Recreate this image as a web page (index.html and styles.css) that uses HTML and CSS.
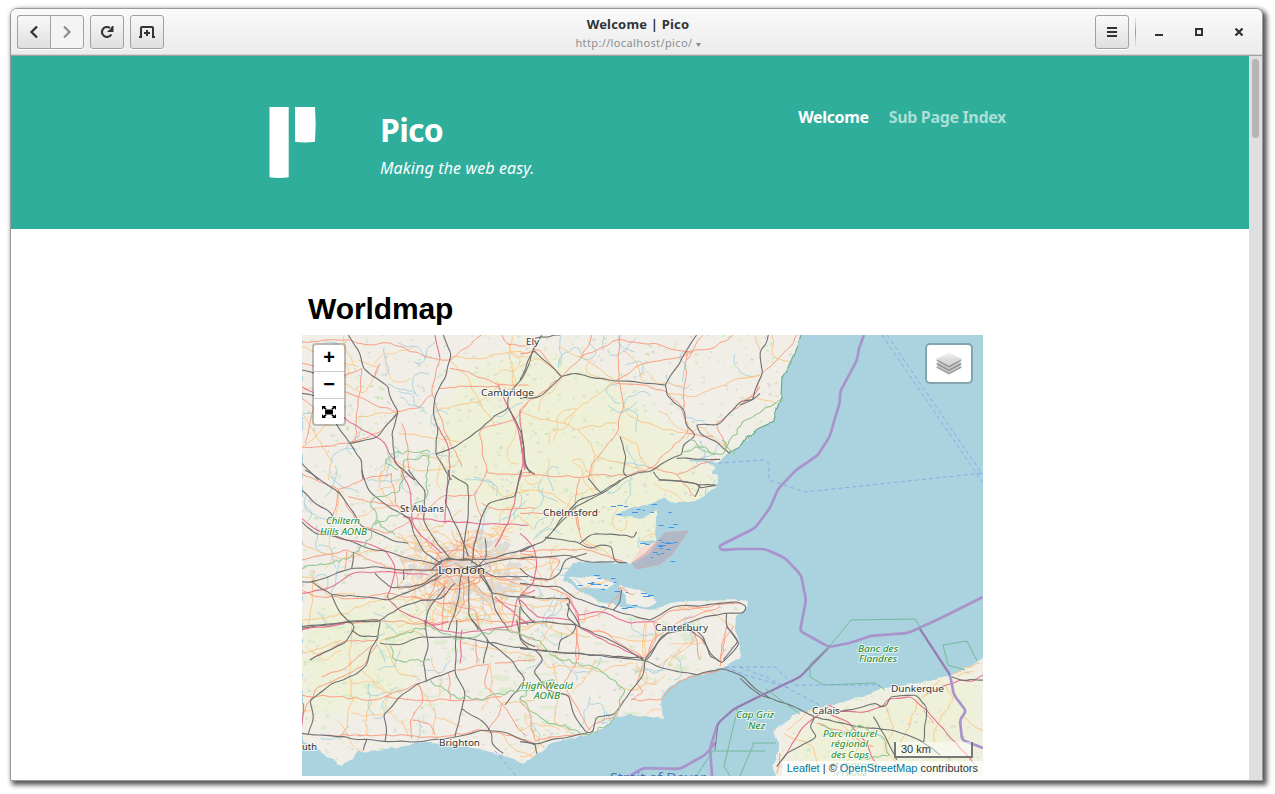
FILE: index.html
```
<!DOCTYPE html>
<html lang="en">
<head>
<meta charset="utf-8">
<title>Welcome | Pico</title>
<link rel="stylesheet" href="styles.css">
</head>
<body>
<div class="window">
  <div class="titlebar">
    <div class="tools">
      <div class="pair">
        <button class="btn"><svg width="16" height="16" viewBox="0 0 16 16"><path d="M11 2.500 5.500 8l5.500 5.500" fill="none" stroke="#2e3436" stroke-width="2.300"/></svg></button>
        <button class="btn off"><svg width="16" height="16" viewBox="0 0 16 16"><path d="M5 2.500 10.500 8 5 13.500" fill="none" stroke="#8b8e8f" stroke-width="2.200"/></svg></button>
      </div>
      <button class="btn"><svg width="16" height="16" viewBox="0 0 16 16"><path d="M12.300 10.500A5 5 0 1 1 11 4" fill="none" stroke="#2e3436" stroke-width="2.100"/><path d="M14.500 2v6H8.500V7l2.500-1.500L13 2z" fill="#2e3436"/></svg></button>
      <button class="btn"><svg width="16" height="16" viewBox="0 0 16 16"><path d="M0 13h2V4Q2 3 3 3h10q1 0 1 1v9h2" fill="none" stroke="#2e3436" stroke-width="2"/><path d="M5 9h6M8 6v6" stroke="#2e3436" stroke-width="2"/></svg></button>
    </div>
    <div class="heading"><div class="title">Welcome | Pico</div><div class="url">http://localhost/pico/ <svg width="5" height="4" viewBox="0 0 5 4"><path d="M0 0h5L2.500 4z" fill="#888"/></svg></div></div>
    <div class="controls">
      <button class="btn"><svg width="16" height="16" viewBox="0 0 16 16"><path d="M3 4h10M3 8h10M3 12h10" stroke="#2e3436" stroke-width="2"/></svg></button>
      <span class="sep"></span>
      <svg width="16" height="16" viewBox="0 0 16 16"><path d="M4 11h8" stroke="#2e3436" stroke-width="2"/></svg>
      <svg width="16" height="16" viewBox="0 0 16 16"><path d="M5 5h6v6H5z" fill="none" stroke="#2e3436" stroke-width="2"/></svg>
      <svg width="16" height="16" viewBox="0 0 16 16"><path d="M4.500 4.500l7 7M11.500 4.500l-7 7" stroke="#2e3436" stroke-width="2.300"/></svg>
    </div>
  </div>
  <div class="viewport">
    <div class="page">
      <header class="banner">
        <svg class="logo" width="48" height="72" viewBox="0 0 48 72"><path d="M.5 0H19.700v70.300q-9.500 1.400-19.200 0zM26 0h20q1.400 17 0 34.800-10 1.600-20 0z" fill="#fff"/></svg>
        <div class="brand"><h1>Pico</h1><p>Making the web easy.</p></div>
        <nav><a class="here">Welcome</a><a>Sub Page Index</a></nav>
      </header>
      <main>
        <h2>Worldmap</h2>
        <div class="map">
          <svg class="tiles" width="681" height="441" viewBox="302 335 681 441">
            <defs>
              <filter id="shore" x="302" y="335" width="681" height="441" filterUnits="userSpaceOnUse" color-interpolation-filters="sRGB"><feTurbulence type="fractalNoise" baseFrequency=".08" numOctaves="3" seed="8"/><feDisplacementMap in="SourceGraphic" scale="5" xChannelSelector="R" yChannelSelector="G"/></filter>
              <filter id="blur" x="-30%" y="-30%" width="160%" height="160%"><feGaussianBlur stdDeviation="9"/></filter>
              <clipPath id="land"><path d="M302 325H802L798 345 790 363 782 378 781 398 775 412 773 422 755 430 748 440 740 447 728 453 718 462 680 457 716 466 712 474 719 476 717 485 706 495 695 501 676 503 664 497 655 503 640 506 612 514 640 519 657 510 656 540 634 541 650 545 640 557 630 563 590 562 573 563 566 573 563 581 580 590 600 602 650 611 670 604 690 601 740 600 748 601 747 610 736 617 735 630 741 645 740 657 722 668 680 680 667 690 661 700 663 719 630 714 615 717 597 733 550 743 540 752 525 763 510 758 495 753 460 745 430 742 400 747 370 751 357 752 350 760 342 766 325 755 315 746 302 742ZM990 656 950 676 920 683 885 688 850 700 820 708 800 712 786 723 773 731 778 745 777 760 772 766 778 780H990ZM568 578 598 577 616 583 606 589 580 587ZM620 586 645 592 658 602 650 608 628 604Z"/></clipPath>
            </defs>
            <rect x="302" y="335" width="681" height="441" fill="#aad3df"/>
            <g filter="url(#shore)">
              <g clip-path="url(#land)">
                <rect x="290" y="320" width="710" height="470" fill="#f1eee8"/>
                <g filter="url(#blur)" fill="#eef1d8">
                  <path d="M435 420 470 365 540 350 620 385 690 450 720 490 660 560 550 550 500 520 440 490ZM302 600h130l-30 100-100 20ZM800 720l180-50v110H780Z"/>
                </g>
                <g id="patches"></g>
              </g>
              <path d="M801 335 798 345 790 363 782 378 781 398 775 412 773 422 755 430 740 447 728 453" fill="none" stroke="#6cae8c" stroke-width="1.200"/>
            </g>
            <g clip-path="url(#land)"><path id="creeks"/><path id="lanes"/></g>

            <g class="net">
              <g transform="translate(295 280) scale(.33333)">
                <path class="s" d="M20 200 100 230 190 260M190 240 250 260 230 310 200 340 120 300M465 240 520 290 550 360 600 440M465 230 560 235 650 215 720 220M310 395 190 410M20 400 110 540 100 600M20 505 100 430M310 460 400 470 500 490M250 600 280 540 360 570 480 560M610 315 560 360 430 390M640 190 660 340M380 520 430 540"/>
                <path class="p" d="M20 185 150 180 230 195 290 190 380 225 465 240 560 165M435 235 410 330 430 400 500 560M465 265 520 275 610 315 700 315M430 325 510 320 610 320M200 265 190 380 180 490 20 500M255 250 240 290M20 250 140 290 200 265M150 335 230 370 310 395 370 385 410 345M310 400 250 460 170 485M320 430 340 520 345 580M20 355 60 380 30 490M700 365 660 420 555 450 575 580 720 580M620 165 640 195 720 195"/>
                <path class="m" d="M420 165 435 235M610 315 640 380 670 450 690 570M20 320 70 345 150 415 200 450 260 480 310 560 360 600M430 440 460 500 465 600"/>
                <path class="r" d="M160 165 190 210 205 265 280 320 285 350 310 395 290 460 300 550 360 600M445 165 468 220 455 280 422 345 415 400 428 440 422 520 470 600M422 522 490 495 560 445 600 405 640 385 640 350 690 280 718 200M640 385 680 460 692 565 720 585M20 270 70 285M20 340 100 355 125 435 165 490 200 540 205 600M165 490 250 470 305 400M20 550 70 600"/>
              </g>
              <g transform="translate(520 330) scale(.33333)">
                <path class="s" d="M0 245 60 270 130 280 175 300 290 275M130 280 165 240 240 190 290 155M310 220 330 260 400 285 430 300 500 305M175 300 215 340 225 375 370 420M290 310 350 340 375 410M310 60 355 110 370 155M120 50 200 90 285 150M440 190 520 200 560 185 640 150 720 135M0 480 100 490 160 540M225 375 205 445M0 110 60 85 120 135M0 560 40 600M500 325 540 290 620 350"/>
                <path class="p" d="M0 70 60 60 125 140 60 190 0 240M125 140 185 80 290 30 420 45 500 65 580 55 640 15M300 15 295 150 310 220 290 310 215 400 205 445M290 160 380 165 440 185 480 220 505 300 490 320 430 375 400 410 325 435 130 440 0 435M500 60 490 240M550 15 500 90M590 280 600 310 625 370M500 310 580 320M590 280 660 230 720 170M380 410 470 435 590 385M470 435 525 500M180 445 165 520M165 530 180 600M0 550 150 560 240 545M290 150 370 100 460 85 520 65M215 15 205 50 185 80"/>
                <path class="m" d="M0 240 10 400 0 440M0 320 15 410"/>
                <path class="r" d="M530 15 435 165 440 195 495 245 500 290 520 305 525 320 490 345 485 375 455 385 400 420 350 430 320 440 245 490 165 530 100 600M0 150 40 60 120 135 125 140 160 130 230 145 435 165M125 140 60 200 0 205M40 60 65 15M45 25 120 15M300 320 318 380 310 430 322 440M205 445 245 490M400 425 415 450 490 455 540 465 585 465M540 465 525 500M530 285 600 282 660 215 700 210 720 190M530 285 545 315 590 335 630 370M5 300 15 400 30 430M470 385 600 388"/>
              </g>
              <g transform="translate(740 330) scale(.33333)">
                <path class="s" d="M45 15 60 60M95 15 100 80 150 95M0 145 60 135M50 205 105 220"/><path class="p" d="M170 15 150 50 105 95 65 130 40 200 0 215"/><path class="r" d="M85 15 80 40 60 65 68 130 42 190 40 208 0 225"/>
              </g>
              <g transform="translate(295 470) scale(.33333)">
                <path class="s" d="M20 220 80 250 140 270 280 230M60 300 40 480M20 450 120 440 200 410 280 380M300 110 250 50 260 0M300 200 380 230 470 220 590 250M310 250 340 320 310 350M380 180 440 170 500 120M400 250 350 330 420 430 500 450M470 180 490 240 450 290 500 330 470 390 490 430M520 180 520 230 610 280 590 340 620 390M540 290 540 360 620 440 650 480M320 270 400 280 430 340 560 370 700 365M330 400 400 370 440 380 490 350M580 40 620 80 700 60M600 300 700 290M600 200 550 180 490 230 440 310 470 360 560 300M380 300 390 370 480 440M20 320 60 330 100 380 180 370M640 160 590 240 620 260 720 250M310 190 360 240 450 250M420 200 400 240 440 260M550 210 580 190 640 200M600 330 660 350 720 340M340 360 400 340 440 350M450 400 540 390 590 410M540 440 600 430 680 440M320 430 360 460 420 450"/>
                <path class="p" d="M20 10 130 60 200 30 290 10M130 60 120 120 100 150M160 80 250 100 380 115M200 170 280 190 350 150 450 75 540 75 570 20 575 0M540 75 560 150 530 250 550 310 700 350M20 270 160 240 300 300 400 300 470 270 560 260 720 270M150 300 155 245M130 60 190 160M290 10 300 100 380 200 440 270M20 360 60 380 190 385 290 370 400 390 460 330M300 300 310 360 450 320 560 320 680 330M450 330 440 480M500 320 600 390 670 410M350 380 460 400 540 420 560 480M560 100 620 120 720 115M140 460 230 450 390 460 530 450 700 460M400 390 460 250 540 200M480 210 540 240 590 300 490 350 420 290M430 250 500 240 560 280 550 340 470 360 420 330 430 250M500 330 510 400 480 440M440 290 480 280 530 300"/>
                <path class="m" d="M20 145 65 180 150 210 215 220 275 245 300 290 290 345 275 380 310 420 410 465 460 455M320 0 345 60 350 150 370 190 440 250M325 140 450 155 540 160 700 165M460 0 450 160M680 0 660 90 640 160 600 230M20 370 100 355 170 310 250 305 400 315M650 470 670 380 720 360M600 380 700 465"/>
                <path class="r" d="M30 0 130 65 170 120 195 165 290 210 340 220M20 60 60 100 100 120 115 140M20 155 60 190 130 200 220 235 280 245 340 265 430 285M200 0 220 60 280 110 345 145 355 190 390 250 440 280M340 0 390 60 385 150 420 210 470 270M460 0 465 20 450 100 490 180 520 260M470 15 520 45 520 120 510 200 505 270M680 0 660 80 580 100 565 130 545 190 530 280M20 335 50 335 170 295 250 290 320 300 430 300M240 310 290 355 380 345 430 310M50 335 110 375 200 380 280 390 330 370 420 330 450 300M20 475 160 455 250 455 310 415 380 390 440 385 480 340M110 375 130 420 165 460M170 295 175 245M430 285 450 265 490 270 600 265 720 225M440 300 540 290 620 270 720 260M530 290 600 320 700 320M540 290 590 370 660 380 720 380M540 290 560 310 590 360 600 420 640 480M500 310 490 390 480 430 460 480M520 320 520 430 550 480M410 300 440 270 520 265 570 300M450 350 400 420 390 480M570 205 575 260 530 310M670 380 680 420 720 460M325 300 325 330"/>
              </g>
              <g transform="translate(520 480) scale(.33333)">
                <path class="s" d="M0 280 120 240M190 180 240 205 290 240M0 330 60 360 150 360M160 350 200 320 270 300M0 375 100 380 160 340M0 440 60 430 130 430 160 460M380 430 370 540M470 380 570 390 640 440M230 450 320 480 400 480 430 440M60 500 130 540M200 380 190 430M100 420 60 500 0 490M20 240 50 260 70 320"/>
                <path class="p" d="M0 215 100 210 200 210 310 245M165 95 190 190 230 210M30 300 90 300 120 240 0 220M0 310 80 320 150 350 175 420 240 400 295 350 300 320 340 345M400 425 460 390 600 375 665 370M170 440 175 540M400 425 450 450 520 450 540 540M375 535 400 480 470 430 600 380M600 540 610 480 640 440M185 445 260 460 370 535"/>
                <path class="m" d="M0 160 40 200 50 260 40 310 0 350M0 360 50 410 150 420M175 405 240 395 330 430 400 425M140 350 175 400 180 445 280 495 370 535"/>
                <path class="r" d="M0 215 70 185 140 100 175 60 240 40 300 0M75 172 170 185 210 205 240 195 275 200 285 245 320 248M0 235 140 225 200 245 285 245M180 190 215 162 320 165 340 175 350 155M0 265 30 290 90 300 120 280 135 240 200 220M0 310 70 320 120 320 165 355 280 390 390 420M0 345 60 355 150 355 140 410 175 440 280 485 370 540M140 370 180 440M390 420 460 380 560 375 650 365 680 380 670 400 610 400 540 415 450 450 420 480 380 540M510 450 550 480 570 530 600 545M280 390 300 370 305 330M0 430 70 425 170 435 160 460 120 480 115 510M620 400 620 440 655 485 610 540M0 505 90 515 240 525 370 535M415 0 530 10 540 25 590 15M0 380 0 480 30 510"/>
              </g>
              <g transform="translate(295 620) scale(.33333)">
                <path class="s" d="M170 20 165 150 170 250 140 355M270 75 310 160 370 170M250 70 340 30 390 50M230 240 210 310 220 350M370 195 420 270 410 345M420 290 500 320M500 70 620 90 720 110M585 130 590 220 560 270M200 150 270 220M620 250 720 240M20 100 140 60M320 300 340 345M620 340 660 390 720 410"/>
                <path class="p" d="M20 225 100 230 240 240 300 215 370 190M45 120 145 65 250 60M20 290 45 240 70 200 200 140 245 75M370 190 385 240 345 300 350 355M270 230 380 240 530 240 620 230M100 345 260 345 440 350 560 330 620 340 720 370M485 150 580 130 570 200 620 250 610 290 580 330M540 50 545 130M350 300 400 310 420 345M620 250 660 310 690 345M580 30 640 30 720 60M460 160 465 240M240 70 140 150 80 170M600 130 720 120"/>
                <path class="m" d="M20 30 150 10M390 0 430 30 500 40 660 15 720 0M500 30 495 130M25 250 20 320"/>
                <path class="r" d="M20 20 160 5 250 0M45 120 90 95 150 70 180 20 160 0M170 30 200 50 250 50 255 0M250 50 225 90 215 135 180 165 110 190 45 240 55 290 40 345M20 340 130 350 270 365 380 365 460 355 485 350 570 330 640 340 720 375M270 365 275 330 265 285 320 225 370 190 400 180 480 150M390 0 400 80 385 130 395 185M485 0 480 160 510 215 500 270 480 350M255 70 310 75 380 50 480 50 720 90M530 0 580 60 565 130M575 60 650 120 690 180 630 255M500 265 570 310 590 340 590 370 625 400M215 360 205 390M665 0 680 60 720 80"/>
              </g>
              <g transform="translate(520 620) scale(.33333)">
                <path class="s" d="M0 30 60 10 130 40 210 50M50 80 80 140 180 140 230 155 340 130M370 0 370 110M100 130 120 220 100 300 155 340M230 120 190 190 160 210M0 330 50 310 120 330M410 140 490 90 530 60M0 410 40 400 90 350"/>
                <path class="p" d="M0 245 30 280 45 365 100 350 200 340 225 310 290 290 310 240M170 30 170 130 130 190 180 280 210 330M375 120 350 190 370 220 330 240 420 240 480 180 600 150M400 0 410 50 375 120M520 30 560 80M600 140 620 20"/>
                <path class="r" d="M0 85 45 90 150 100 370 120 430 145 530 165 605 145 670 170 710 210 750 235M45 90 70 120 40 155 80 210 145 225 165 290 200 340 220 335 230 290 280 285 310 245 370 165 375 120 430 45 520 25 550 50 570 100 605 130 658 70 620 20M0 365 45 372 120 355 200 340M45 372 50 400"/>
              </g>
              <g transform="translate(740 600) scale(.33333)">
                <path class="s" d="M140 390 220 330M440 320 460 380 430 450 480 500M530 300 510 380 470 450M620 260 640 300 590 380 580 440M640 220 720 190M280 340 360 440 300 500M600 240 540 300M665 350 730 390M130 400 220 440 230 500M650 230 700 215"/>
                <path class="m" d="M265 315 300 335 380 335 430 320 440 300 510 290 560 330 620 400 700 490M265 340 330 370 380 430 400 480 440 515M125 480 190 380 265 320M560 280 660 240 700 245 730 225"/>
                <path class="p" d="M120 460 110 520M230 370 320 400 400 440M550 330 580 370"/>
                <path class="r" d="M0 235 60 285 150 315 225 350 210 380 230 410 140 460 110 500M225 350 350 380 460 390 540 420 600 465M300 335 410 310 420 320 440 318 450 290 530 285 560 320 550 430M400 350 450 440 470 480M635 230 660 240 730 240"/>
              </g>
            </g>

            <g class="parks">
              <path d="M302 569 325 565 350 557 370 540 376 522 372 500 400 490 404 460 430 455 425 500 375 525M375 520 395 535M398 470 385 460 395 453 430 452"/>
              <path d="M385 640 430 625 455 640 500 630 540 640 550 655 600 670 625 690 620 705 612 720 590 735 545 720 520 700 530 690 555 680 520 690 480 700 450 695 430 680M390 645 395 660 430 660"/>
              <path d="M690 440 720 455 745 420 785 400M722 440 735 455M683 452 700 448 715 455M820 725 840 735 860 725 880 735 890 755 860 760"/>
            </g>
            <g class="borders">
              <path d="M864 335 859 348 857 360 849 375 840 392 840 402 835 418 830 436 818 455 796 470 778 489 770 508 755 528 719 546 721 550 735 549 765 549 785 558 801 575 806 600 800 631 829 647 850 643 870 636 908 633 941 618 983 597M829 647 800 677 758 697 734 709 718 723 710 748 712 776M630 776 643 768 680 769 705 755 716 742M920 629 950 675 954 695 966 711 960 720 962 740 983 748"/>
              <path class="thin" d="M829 647 800 677 758 697 734 709 718 723 715 750M920 629 950 675"/>
            </g>
            <g fill="none" stroke="#75b99a" stroke-width="1"><path d="M829 647 851 620 915 619 921 629M829 647 810 664V677L824 685 875 683 885 690M943 645 967 641 977 661M943 645 948 665 965 670M738 707 724 766 730 776M752 743H776M740 776 754 743M713 751H765M713 751 697 775M766 689 800 714"/></g>
            <g fill="none" stroke="#839ee8" stroke-width=".8" stroke-dasharray="4 3"><path d="M882 335 985 486M887 335 985 478M718 463 764 460 769 464V480L805 492 880 484 983 473M725 667 775 667 794 685 880 685M725 667 745 675 790 688M740 667 768 678 820 705M495 751 516 776"/></g>
            <path d="M632 561 640 548 658 541 650 553 634 563Z" fill="#f3ddd3"/>
            <path d="M632 563 646 553 665 533 688 531 672 554 660 564 637 569Z" fill="#b78899" fill-opacity=".35" stroke="#d2a6a5" stroke-width=".8"/>
            <path id="tides" stroke="#3f95e7" stroke-width="1"/>
            <g class="labels">
              <text x="526" y="345" textLength="13" lengthAdjust="spacingAndGlyphs">Ely</text><text x="481" y="396" textLength="53" lengthAdjust="spacingAndGlyphs">Cambridge</text><text x="400" y="512" textLength="44" lengthAdjust="spacingAndGlyphs">St Albans</text><text x="543" y="516" textLength="55" lengthAdjust="spacingAndGlyphs">Chelmsford</text><text class="city" x="438" y="574" textLength="47" lengthAdjust="spacingAndGlyphs">London</text><text x="655" y="631" textLength="53" lengthAdjust="spacingAndGlyphs">Canterbury</text><text x="439" y="746" textLength="41" lengthAdjust="spacingAndGlyphs">Brighton</text><text x="302" y="750" textLength="15" lengthAdjust="spacingAndGlyphs">uth</text><text x="891" y="692" textLength="53" lengthAdjust="spacingAndGlyphs">Dunkerque</text><text x="812" y="714" textLength="28" lengthAdjust="spacingAndGlyphs">Calais</text>
              <g class="green"><text x="326" y="524" textLength="34" lengthAdjust="spacingAndGlyphs">Chiltern</text><text x="320" y="535" textLength="47" lengthAdjust="spacingAndGlyphs">Hills AONB</text><text x="521" y="689" textLength="52" lengthAdjust="spacingAndGlyphs">High Weald</text><text x="534" y="699" textLength="26" lengthAdjust="spacingAndGlyphs">AONB</text><text x="858" y="652" textLength="40" lengthAdjust="spacingAndGlyphs">Banc des</text><text x="859" y="662" textLength="38" lengthAdjust="spacingAndGlyphs">Flandres</text><text x="736" y="718" textLength="38" lengthAdjust="spacingAndGlyphs">Cap Griz</text><text x="748" y="729" textLength="17" lengthAdjust="spacingAndGlyphs">Nez</text><text x="823" y="737" textLength="54" lengthAdjust="spacingAndGlyphs">Parc naturel</text><text x="831" y="747" textLength="37" lengthAdjust="spacingAndGlyphs">régional</text><text x="831" y="758" textLength="38" lengthAdjust="spacingAndGlyphs">des Caps</text><text x="830" y="768" textLength="44" lengthAdjust="spacingAndGlyphs">et marais</text><text x="833" y="778" textLength="34" lengthAdjust="spacingAndGlyphs">d'Opale</text></g>
              <text class="sea" x="610" y="782" textLength="96" lengthAdjust="spacingAndGlyphs">Strait of Dover</text>
            </g>
          </svg>
          <div class="zoomer">
            <a>+</a><a>−</a>
            <a><svg width="14" height="12" viewBox="0 0 14 12"><rect x="3" y="3.500" width="8" height="5" rx="1.500"/><path d="M0 0h4L3 1.200 4.700 2.700 3.500 3.800 1.500 2.200 0 4zM14 0h-4l1 1.200-1.700 1.500 1.200 1.100 2-1.600L14 4zM0 12h4l-1-1.200 1.700-1.500-1.200-1.100-2 1.600L0 8zM14 12h-4l1-1.200-1.700-1.500 1.200-1.100 2 1.600L14 8z"/></svg></a>
          </div>
          <div class="layers"><svg width="26" height="24" viewBox="0 0 26 24"><defs><linearGradient id="sheet" x2="0" y2="1"><stop stop-color="#f6f6f6"/><stop offset=".5" stop-color="#dcdcdc"/><stop offset="1" stop-color="#d2d2d2"/></linearGradient></defs><path d="m13 9.500 13 6-13 7-13-7z" fill="#9a9a9a"/><path d="m13 8 13 6-13 7-13-7z" fill="#c4c4c4"/><path d="m13 6 13 6-13 7-13-7z" fill="#8c8c8c"/><path d="m13 4.500 13 6-13 7-13-7z" fill="#c8c8c8"/><path d="m13 2 13 6-13 7.500L0 8z" fill="#888"/><path d="M13 .500 26 7 13 14 0 7z" fill="url(#sheet)"/></svg></div>
          <div class="scale">30 km</div>
          <div class="credit"><a>Leaflet</a> | © <a>OpenStreetMap</a> contributors</div>
        </div>
      </main>
    </div>
    <div class="scrollbar"><div class="thumb"></div></div>
  </div>
</div>
<script src="map.js"></script>
</body>
</html>
```
FILE: map.js
```
// Fills in the small background detail of the map with a fixed seed.
let seed = 7;
const rnd = () => (seed = (seed * 16807) % 2147483647) / 2147483647;
const f = n => n.toFixed(1);
const set = (id, d) => document.getElementById(id).setAttribute('d', d);

// Draws a smooth curve through the midpoints of a line.
function curve(p) {
  let d = `M${f(p[0][0])} ${f(p[0][1])}`;
  for (let i = 1; i < p.length - 1; i++) {
    const mx = (p[i][0] + p[i + 1][0]) / 2, my = (p[i][1] + p[i + 1][1]) / 2;
    d += `Q${f(p[i][0])} ${f(p[i][1])} ${f(mx)} ${f(my)}`;
  }
  const e = p[p.length - 1];
  return d + `L${f(e[0])} ${f(e[1])}`;
}
// Adds small bends to a straight-sided line, keeping its corner points.
function bend(el, step, amp) {
  const out = el.getAttribute('d').split('M').filter(Boolean).map(part => {
    const n = part.trim().split(/\s+/).map(Number), p = [[n[0], n[1]]];
    for (let i = 2; i < n.length; i += 2) {
      const x0 = n[i - 2], y0 = n[i - 1], dx = n[i] - x0, dy = n[i + 1] - y0;
      const len = Math.hypot(dx, dy) || 1, k = Math.max(1, Math.round(len / step));
      for (let j = 1; j < k; j++) {
        const o = (rnd() - 0.5) * 2 * amp;
        p.push([x0 + dx * j / k - dy / len * o, y0 + dy * j / k + dx / len * o]);
      }
      p.push([n[i], n[i + 1]]);
    }
    return curve(p);
  });
  el.setAttribute('d', out.join(''));
}
const bends = { r: [20, 2.5], m: [20, 3], p: [16, 4.5], s: [15, 5.5] };
document.querySelectorAll('.net path').forEach(el => bend(el, ...bends[el.getAttribute('class')]));
document.querySelectorAll('.parks path').forEach(el => bend(el, 4, 2.6));
document.querySelectorAll('.borders path').forEach(el => bend(el, 7, 0));

function walk(x, y, steps, size) {
  let a = rnd() * 6.28;
  const p = [[x, y]];
  for (let i = 0; i < steps; i++) {
    a += (rnd() - 0.5) * 1.6;
    x += Math.cos(a) * size;
    y += Math.sin(a) * size;
    p.push([x, y]);
  }
  return curve(p);
}
let patches = '';
const tints = ['#d6e8c7', '#dde9cf', '#dedbd8', '#e6ecc9', '#d1e4c0'];
for (let i = 0; i < 3200; i++) {
  const r = 0.4 + rnd() * 1.1;
  patches += `<ellipse cx="${f(302 + rnd() * 681)}" cy="${f(335 + rnd() * 441)}" rx="${f(r * 1.3)}" ry="${f(r)}" fill="${tints[i % 5]}"/>`;
}
for (let i = 0; i < 60; i++) {
  patches += `<ellipse cx="${f(302 + rnd() * 400)}" cy="${f(610 + rnd() * 120)}" rx="${f(3 + rnd() * 7)}" ry="${f(1 + rnd() * 2)}" fill="#d8e9c9" opacity=".7"/>`;
}
for (let i = 0; i < 130; i++) {
  const a = rnd() * 6.28, r = rnd() * 60;
  patches += `<ellipse cx="${f(462 + Math.cos(a) * r)}" cy="${f(570 + Math.sin(a) * r * 0.7)}" rx="4" ry="3" fill="#dfdcd8"/>`;
}
document.getElementById('patches').innerHTML = patches;

let creeks = '';
for (let i = 0; i < 100; i++) creeks += walk(305 + rnd() * 450, 340 + rnd() * 390, 10, 3.5);
set('creeks', creeks);

let lanes = '';
for (let i = 0; i < 55; i++) lanes += walk(305 + rnd() * 410, 340 + rnd() * 390, 9, 5);
for (let i = 0; i < 80; i++) lanes += walk(405 + rnd() * 110, 525 + rnd() * 95, 6, 4);
set('lanes', lanes);

let tides = '';
const flats = [[650, 512, 30, 50], [560, 573, 60, 14], [600, 588, 50, 20], [610, 500, 45, 16], [640, 540, 35, 25]];
for (const [x, y, w, h] of flats) {
  for (let i = 0; i < 11; i++) tides += `M${f(x + rnd() * w)} ${Math.round(y + rnd() * h) + 0.5}h${f(2 + rnd() * 4)}`;
}
set('tides', tides);
```
FILE: styles.css
```
html { height: 794px; }
body { box-sizing: border-box; height: 794px; margin: 0; padding: 8px 0 0 10px; background: #fff; }
.window { box-sizing: border-box; width: 1253px; height: 773px; border: 1px solid #999; border-radius: 7px 7px 0 0; box-shadow: 3px 3px 5px 1px rgba(0,0,0,.65), 0 0 5px rgba(0,0,0,.12); display: flex; flex-direction: column; overflow: hidden; background: #fff; }
.titlebar { box-sizing: border-box; height: 47px; flex: none; display: grid; grid-template-columns: 1fr auto 1fr; align-items: center; padding: 0 15px 0 6px; background: linear-gradient(#fafafa, #ebebeb); border-bottom: 1px solid #a0a0a0; box-shadow: inset 0 -1px #d3d3d0; font-family: "Noto Sans", sans-serif; }
.tools, .pair, .controls { display: flex; align-items: center; }
.tools { gap: 6px; }
.btn { box-sizing: border-box; width: 34px; height: 34px; padding: 0; display: flex; align-items: center; justify-content: center; border: 1px solid #a1a1a1; border-radius: 3px; background: linear-gradient(#f9f9f9, #dfdfdf); box-shadow: 0 1px #fff; }
.pair .btn:first-child { width: 33px; border-radius: 3px 0 0 3px; border-right: 0; }
.btn.off { border-radius: 0 3px 3px 0; background: #f4f4f4; }
.heading { text-align: center; padding: 2px 0 0 12px; }
.title { font-weight: bold; font-size: 13px; line-height: 18px; color: #2e3436; letter-spacing: .2px; }
.url { font-size: 11px; line-height: 19px; color: #8b8e8f; letter-spacing: .37px; }
.controls { justify-content: flex-end; gap: 24px; }
.controls .btn { margin-right: -18px; }
.sep { width: 1px; height: 32px; margin-right: -9px; background: linear-gradient(transparent, #999, transparent); }
.viewport { display: flex; flex: 1; min-height: 0; }
.page { width: 1238px; overflow: hidden; }
.scrollbar { flex: 1; background: #dfdfdf; padding: 3px 3px; }
.thumb { width: 7px; height: 79px; border-radius: 4px; background: #b3b5b6; }
.banner { box-sizing: border-box; height: 173px; background: #2eae9b; color: #fff; display: flex; align-items: flex-start; padding: 51px 243px 0 258px; font-family: "Noto Sans", sans-serif; }
.brand { margin: 1px 0 0 63px; }
.brand h1 { font-size: 32px; line-height: 44px; margin: 0; letter-spacing: -.7px; }
.brand p { font-size: 16px; line-height: 24px; margin: 4px 0 0; font-style: italic; white-space: nowrap; letter-spacing: .13px; }
nav { margin-left: auto; display: flex; gap: 20px; font-size: 16px; line-height: 21px; font-weight: bold; white-space: nowrap; letter-spacing: -.34px; }
nav a { color: #abdfd7; }
nav .here { color: #fff; }
main { padding: 60px 0 0 291px; }
h2 { font: bold 30px/40px "Liberation Sans", Arial, sans-serif; letter-spacing: -.1px; color: #000; margin: 0 0 6px 6px; }
.map { position: relative; width: 681px; height: 441px; overflow: hidden; font-family: "Liberation Sans", Arial, sans-serif; }
.tiles { display: block; }
.net path { fill: none; vector-effect: non-scaling-stroke; stroke-linejoin: round; }
.net .m { stroke: #e66f90; stroke-width: 1.1px; }
.net .p { stroke: #fb9b80; stroke-width: 1px; }
.net .s { stroke: #fbc584; stroke-width: .95px; }
.net .r { stroke: #707070; stroke-width: 1.1px; }
#creeks { fill: none; stroke: #a5d0df; stroke-width: .9px; }
#lanes { fill: none; stroke: #fbcb91; stroke-width: .9px; }
.parks { fill: none; stroke: #94c894; stroke-width: 1.1px; }
.borders { fill: none; stroke: #a893cc; stroke-width: 2.7px; stroke-linejoin: round; }
.borders .thin { stroke: #7a758a; stroke-width: 1px; }
.labels { font: 9.4px "Noto Sans", sans-serif; fill: #333; stroke: #fff; stroke-opacity: .7; stroke-width: 2px; paint-order: stroke; }
.labels .city { font-size: 11.5px; }
.labels .green { fill: #158a25; font-style: italic; font-size: 9.2px; }
.labels .sea { fill: #4c72ad; font-size: 13px; stroke: none; }
.zoomer { position: absolute; left: 10px; top: 8px; border: 2px solid rgba(0,0,0,.22); border-radius: 4px; background: #fff; background-clip: padding-box; }
.zoomer a { box-sizing: border-box; width: 30px; height: 27px; display: flex; align-items: center; justify-content: center; font: bold 20px/26px "Liberation Sans", sans-serif; border-bottom: 1px solid #ccc; padding-bottom: 3px; }
.zoomer a:last-child { height: 25px; border: 0; padding: 0; }
.layers { position: absolute; right: 10px; top: 8px; width: 44px; height: 37px; border: 2px solid rgba(0,0,0,.22); border-radius: 5px; background: #fff; background-clip: padding-box; display: flex; align-items: center; justify-content: center; }
.scale { position: absolute; box-sizing: border-box; right: 10px; bottom: 18px; width: 79px; height: 16px; border: 2px solid #777; border-top: 0; background: rgba(255,255,255,.5); color: #333; font-size: 11px; line-height: 15px; padding-left: 5px; }
.credit { position: absolute; right: 0; bottom: 0; padding: 0 5px; background: rgba(255,255,255,.7); color: #333; font-size: 11px; line-height: 15px; white-space: nowrap; }
.credit a { color: #0078a8; }
```
